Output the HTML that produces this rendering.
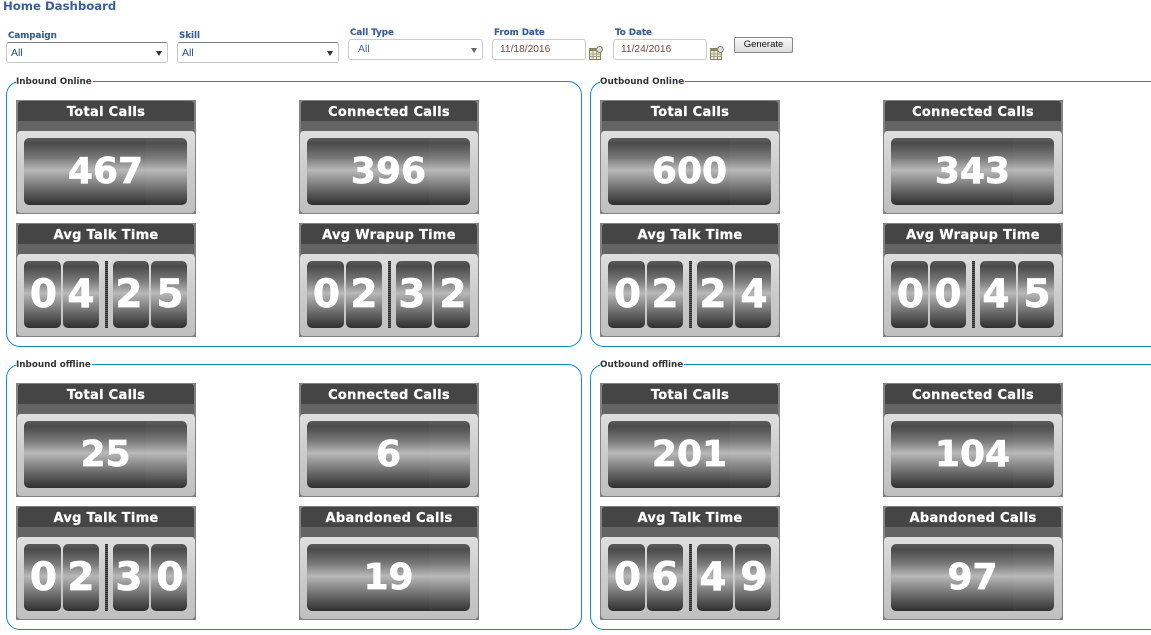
<!DOCTYPE html>
<html><head><meta charset="utf-8"><style>
html,body{margin:0;padding:0;background:#fff;width:1151px;height:635px;overflow:hidden}
body{position:relative;font-family:"DejaVu Sans",sans-serif}
.a{position:absolute}
.t{position:absolute;white-space:nowrap}
.lb{position:absolute;white-space:nowrap;font:bold 8.7px "DejaVu Sans",sans-serif;color:#3a5f96;line-height:13px;-webkit-text-stroke:.15px #3a5f96}
.sel{position:absolute;box-sizing:border-box;background:#fff;border:1px solid #c8c8c8;border-top:1px solid #7d7d7d;border-radius:3px;height:21px;font:10.5px "Liberation Sans",sans-serif;color:#234a80;line-height:21px;padding-left:4px}
.sel i,.s2 i{position:absolute;right:5px;top:8px;width:0;height:0;border:3px solid transparent;border-top:5px solid #333;border-bottom:0}
.s2{position:absolute;box-sizing:border-box;background:#fff;border:1px solid #ccc;border-radius:3px;height:21px;font:10.5px "Liberation Sans",sans-serif;color:#4a6a95;line-height:19px;padding-left:9px}
.s2 i{border-top-color:#666}
.dt{position:absolute;box-sizing:border-box;background:#fff;border:1px solid #ccc;border-radius:3px;height:21px;width:94px;font:10.2px "Liberation Sans",sans-serif;color:#7a4a40;line-height:20px;padding-left:7px}
.fs{position:absolute;box-sizing:border-box;border:1px solid #0d8dc4;border-radius:14px;height:266px}
.lg{position:absolute;white-space:nowrap;font:bold 8.800px "DejaVu Sans",sans-serif;color:#333;background:#fff;line-height:12px;top:-6px;left:9px;padding:0 1px 0 0}
.w{position:absolute;width:180px;height:114px;background:#828282}
.h1{position:absolute;left:2px;top:1px;width:176px;height:20px;background:#454545;border-radius:3px 3px 0 0;color:#fff;font:bold 13px/23px "DejaVu Sans",sans-serif;letter-spacing:.3px;-webkit-text-stroke:.25px #fff;text-align:center}
.h2{position:absolute;left:2px;top:21px;width:176px;height:10px;background:#646464}
.b{position:absolute;left:1px;top:31px;width:178px;height:82px;border-radius:4px;background:linear-gradient(#dfdfdf,#cbcbcb 50%,#c0c0c0)}
.d{position:absolute;top:38px;height:67px;border-radius:5px;background:linear-gradient(#5a5a5a,#4a4a4a 8%,#7a7a7a 30%,#b8b8b8 48%,#a8a8a8 54%,#7c7c7c 70%,#555 85%,#2e2e2e);color:#fff;font:bold 39px/68px "DejaVu Sans",sans-serif;text-align:center;-webkit-text-stroke:.7px #fff}
.d.f{left:8px;width:163px;font-size:36px;line-height:67px}
.d.f:before{content:"";position:absolute;left:122px;top:0;bottom:0;width:41px;background:rgba(255,255,255,.025);border-radius:0 5px 5px 0}
.d1{left:8px;width:37px;text-indent:2px}.d2{left:47px;width:36px}.d3{left:97px;width:36px;text-indent:-4px}.d4{left:135px;width:36px;text-indent:2px}
.sp{position:absolute;left:89px;top:38px;width:3px;height:67px;background:repeating-linear-gradient(#333 0 1px,#555 1px 2px)}
.cal{position:absolute;width:14px;height:14px}
</style></head><body>
<div class="t" style="left:3px;top:-1px;font:bold 11.700px/15px 'DejaVu Sans',sans-serif;color:#3a5f96">Home Dashboard</div>

<div class="lb" style="left:8px;top:30px">Campaign</div>
<div class="sel" style="left:6px;top:42px;width:162px">All<i></i></div>
<div class="lb" style="left:179px;top:30px">Skill</div>
<div class="sel" style="left:177px;top:42px;width:162px">All<i></i></div>
<div class="lb" style="left:350px;top:27px">Call Type</div>
<div class="s2" style="left:348px;top:39px;width:135px">All<i></i></div>
<div class="lb" style="left:494px;top:27px">From Date</div>
<div class="dt" style="left:492px;top:39px">11/18/2016</div>
<svg class="cal" style="left:589px;top:46px" viewBox="0 0 14 14"><rect x=".5" y="2.500" width="11" height="11" fill="#e8e8d8" stroke="#87875c"/><rect x="1" y="3" width="10" height="2" fill="#87875c"/><path d="M4 5v8M7.500 5v8M1 8h10M1 10.500h10" stroke="#a5a585"/><circle cx="10.500" cy="3.500" r="3" fill="#dde" stroke="#87875c"/></svg>
<div class="lb" style="left:615px;top:27px">To Date</div>
<div class="dt" style="left:613px;top:39px">11/24/2016</div>
<svg class="cal" style="left:710px;top:46px" viewBox="0 0 14 14"><rect x=".5" y="2.500" width="11" height="11" fill="#e8e8d8" stroke="#87875c"/><rect x="1" y="3" width="10" height="2" fill="#87875c"/><path d="M4 5v8M7.500 5v8M1 8h10M1 10.500h10" stroke="#a5a585"/><circle cx="10.500" cy="3.500" r="3" fill="#dde" stroke="#87875c"/></svg>
<div class="a" style="left:734px;top:37px;width:59px;height:16px;box-sizing:border-box;border:1px solid #888;border-radius:2px;background:linear-gradient(#fafafa,#dcdcdc);font:9.500px/14px 'Liberation Sans',sans-serif;color:#111;text-align:center">Generate</div>

<div class="fs" style="left:6px;top:81px;width:576px"><div class="lg">Inbound Online</div></div>
<div class="fs" style="left:590px;top:81px;width:600px"><div class="lg">Outbound Online</div></div>
<div class="fs" style="left:6px;top:364px;width:576px"><div class="lg">Inbound offline</div></div>
<div class="fs" style="left:590px;top:364px;width:600px"><div class="lg">Outbound offline</div></div>

<div class="w" style="left:16px;top:100px"><div class="h1">Total Calls</div><div class="h2"></div><div class="b"></div><div class="d f">467</div></div>
<div class="w" style="left:299px;top:100px"><div class="h1">Connected Calls</div><div class="h2"></div><div class="b"></div><div class="d f">396</div></div>
<div class="w" style="left:16px;top:223px"><div class="h1">Avg Talk Time</div><div class="h2"></div><div class="b"></div><div class="d d1">0</div><div class="d d2">4</div><div class="sp"></div><div class="d d3">2</div><div class="d d4">5</div></div>
<div class="w" style="left:299px;top:223px"><div class="h1">Avg Wrapup Time</div><div class="h2"></div><div class="b"></div><div class="d d1">0</div><div class="d d2">2</div><div class="sp"></div><div class="d d3">3</div><div class="d d4">2</div></div>

<div class="w" style="left:600px;top:100px"><div class="h1">Total Calls</div><div class="h2"></div><div class="b"></div><div class="d f">600</div></div>
<div class="w" style="left:883px;top:100px"><div class="h1">Connected Calls</div><div class="h2"></div><div class="b"></div><div class="d f">343</div></div>
<div class="w" style="left:600px;top:223px"><div class="h1">Avg Talk Time</div><div class="h2"></div><div class="b"></div><div class="d d1">0</div><div class="d d2">2</div><div class="sp"></div><div class="d d3">2</div><div class="d d4">4</div></div>
<div class="w" style="left:883px;top:223px"><div class="h1">Avg Wrapup Time</div><div class="h2"></div><div class="b"></div><div class="d d1">0</div><div class="d d2">0</div><div class="sp"></div><div class="d d3">4</div><div class="d d4">5</div></div>

<div class="w" style="left:16px;top:383px"><div class="h1">Total Calls</div><div class="h2"></div><div class="b"></div><div class="d f">25</div></div>
<div class="w" style="left:299px;top:383px"><div class="h1">Connected Calls</div><div class="h2"></div><div class="b"></div><div class="d f">6</div></div>
<div class="w" style="left:16px;top:506px"><div class="h1">Avg Talk Time</div><div class="h2"></div><div class="b"></div><div class="d d1">0</div><div class="d d2">2</div><div class="sp"></div><div class="d d3">3</div><div class="d d4">0</div></div>
<div class="w" style="left:299px;top:506px"><div class="h1">Abandoned Calls</div><div class="h2"></div><div class="b"></div><div class="d f">19</div></div>

<div class="w" style="left:600px;top:383px"><div class="h1">Total Calls</div><div class="h2"></div><div class="b"></div><div class="d f">201</div></div>
<div class="w" style="left:883px;top:383px"><div class="h1">Connected Calls</div><div class="h2"></div><div class="b"></div><div class="d f">104</div></div>
<div class="w" style="left:600px;top:506px"><div class="h1">Avg Talk Time</div><div class="h2"></div><div class="b"></div><div class="d d1">0</div><div class="d d2">6</div><div class="sp"></div><div class="d d3">4</div><div class="d d4">9</div></div>
<div class="w" style="left:883px;top:506px"><div class="h1">Abandoned Calls</div><div class="h2"></div><div class="b"></div><div class="d f">97</div></div>
</body></html>
